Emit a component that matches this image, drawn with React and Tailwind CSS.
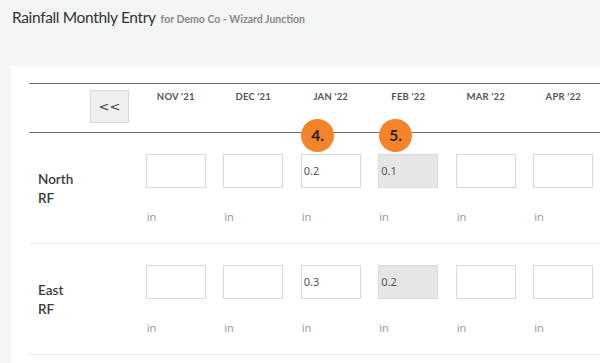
import React from "react";

const months = ["NOV '21", "DEC '21", "JAN '22", "FEB '22", "MAR '22", "APR '22"];
const rows = [
  { name: ["North", "RF"], values: ["", "", "0.2", "0.1", "", ""] },
  { name: ["East", "RF"], values: ["", "", "0.3", "0.2", "", ""] },
];

export default function App() {
  return (
    <div className="relative w-[600px] h-[363px] overflow-hidden bg-[#f4f5f5] font-['Lato',sans-serif]">
      <div className="flex items-baseline gap-[5px] pl-[12px] pt-[6px] h-[66px]">
        <span className="text-[15.5px] tracking-[-0.35px] text-[#333] leading-[22px]">Rainfall Monthly Entry</span>
        <span className="text-[10.5px] font-bold text-[#8a8a8a]">for Demo Co - Wizard Junction</span>
      </div>
      <div className="ml-[11px] bg-white pl-[18px] pt-[17px] w-[620px] h-[320px]">
        <div className="grid grid-cols-[108px_repeat(6,77.5px)] h-[50px] border-t-[1.5px] border-b-[1.5px] border-[#707070]">
          <div className="flex justify-end pr-[8px] pt-[6px]">
            <div className="w-[39px] h-[33px] bg-[#efefef] border border-[#d8d8d8] flex items-center justify-center text-[13px] text-[#444] font-['DejaVu_Sans',sans-serif]">
              &lt;&lt;
            </div>
          </div>
          {months.map((m) => (
            <div key={m} className="text-center pt-[6px] text-[9.5px] font-bold text-[#555] tracking-[0.2px]">
              {m}
            </div>
          ))}
        </div>
        {rows.map((r) => (
          <div key={r.name[0]} className="grid grid-cols-[108px_repeat(6,77.5px)] h-[111px] border-b border-[#ececec]">
            <div className="flex flex-col justify-center pl-[9px] pt-[2px] text-[13.5px] font-semibold text-[#3a3a3a] leading-[19px]">
              <span>{r.name[0]}</span>
              <span>{r.name[1]}</span>
            </div>
            {r.values.map((v, i) => (
              <div key={i} className="flex flex-col items-center pt-[21px]">
                <div className="w-[60px]">
                  <div
                    className={`w-[60px] h-[34px] border border-[#d9d9d9] flex items-center pl-[2px] text-[11px] text-[#555] font-['Noto_Sans',sans-serif] ${
                      i === 3 ? "bg-[#e6e6e6]" : "bg-white"
                    }`}
                  >
                    {v}
                  </div>
                  <div className="mt-[21px] pl-[1px] text-[11px] text-[#9a9a9a] font-['Noto_Sans',sans-serif]">in</div>
                </div>
              </div>
            ))}
          </div>
        ))}
      </div>
      <div className="absolute left-[301px] top-[119px] w-[33px] h-[33px] rounded-full bg-[#f5832a] flex items-center justify-center text-[15.5px] font-bold text-[#222]">
        4.
      </div>
      <div className="absolute left-[379px] top-[119px] w-[33px] h-[33px] rounded-full bg-[#f5832a] flex items-center justify-center text-[15.5px] font-bold text-[#222]">
        5.
      </div>
    </div>
  );
}
